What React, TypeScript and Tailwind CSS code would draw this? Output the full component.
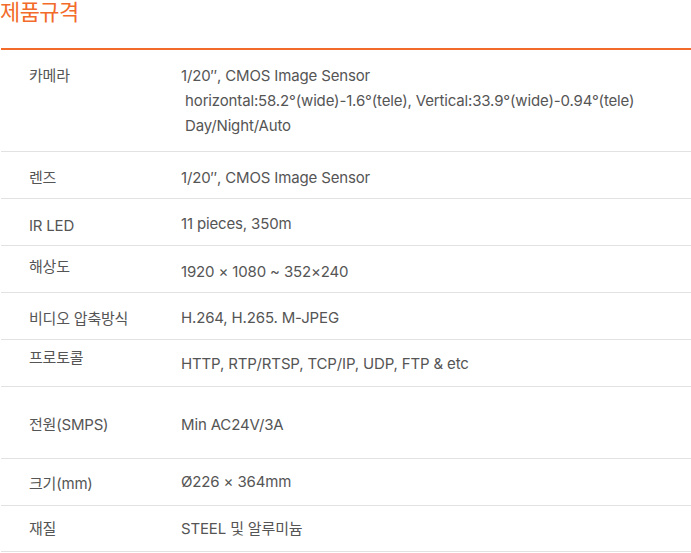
const font = '[font-family:Inter,"Noto_Sans_CJK_KR",sans-serif]';

type Spec = {
  label: string;
  value: string[];
  h: string;
  lp: string;
  vp: string;
};

const specs: Spec[] = [
  {
    label: '카메라',
    value: [
      '1/20″, CMOS Image Sensor',
      '\u00a0horizontal:58.2°(wide)-1.6°(tele), Vertical:33.9°(wide)-0.94°(tele)',
      '\u00a0Day/Night/Auto',
    ],
    h: 'h-[102px]',
    lp: 'pt-[13px]',
    vp: 'pt-[13px]',
  },
  { label: '렌즈', value: ['1/20″, CMOS Image Sensor'], h: 'h-[47px]', lp: 'pt-[13px]', vp: 'pt-[13px]' },
  { label: 'IR LED', value: ['11 pieces, 350m'], h: 'h-[47px]', lp: 'pt-[14px]', vp: 'pt-[12px]' },
  { label: '해상도', value: ['1920 × 1080 ~ 352×240'], h: 'h-[47px]', lp: 'pt-[8px]', vp: 'pt-[13px]' },
  { label: '비디오 압축방식', value: ['H.264, H.265. M-JPEG'], h: 'h-[47px]', lp: 'pt-[13px]', vp: 'pt-[12px]' },
  { label: '프로토콜', value: ['HTTP, RTP/RTSP, TCP/IP, UDP, FTP & etc'], h: 'h-[47px]', lp: 'pt-[5px]', vp: 'pt-[11px]' },
  { label: '전원(SMPS)', value: ['Min AC24V/3A'], h: 'h-[72px]', lp: 'pt-[25px]', vp: 'pt-[25px]' },
  { label: '크기(mm)', value: ['Ø226 × 364mm'], h: 'h-[47px]', lp: 'pt-[12px]', vp: 'pt-[10px]' },
  { label: '재질', value: ['STEEL 및 알루미늄'], h: 'h-[46px]', lp: 'pt-[10px]', vp: 'pt-[10px]' },
];

export default function App() {
  return (
    <div className={`w-[691px] h-[553px] bg-white overflow-hidden ${font}`}>
      <h2 className="h-[48px] text-[22px] leading-[24px] text-[#f26b2a] tracking-[-0.6px]">제품규격</h2>
      <div className="ml-px border-t-2 border-[#f26b2a]">
        {specs.map((s) => (
          <div key={s.label} className={`flex border-b border-[#e2e2e2] ${s.h}`}>
            <div className={`w-[180px] pl-[28px] text-[15px] leading-[25px] text-[#555] tracking-[-0.2px] ${s.lp}`}>
              {s.label}
            </div>
            <div className={`flex-1 text-[15px] leading-[25px] text-[#555] tracking-[-0.15px] ${s.vp}`}>
              {s.value.map((v) => (
                <div key={v}>{v}</div>
              ))}
            </div>
          </div>
        ))}
      </div>
    </div>
  );
}
